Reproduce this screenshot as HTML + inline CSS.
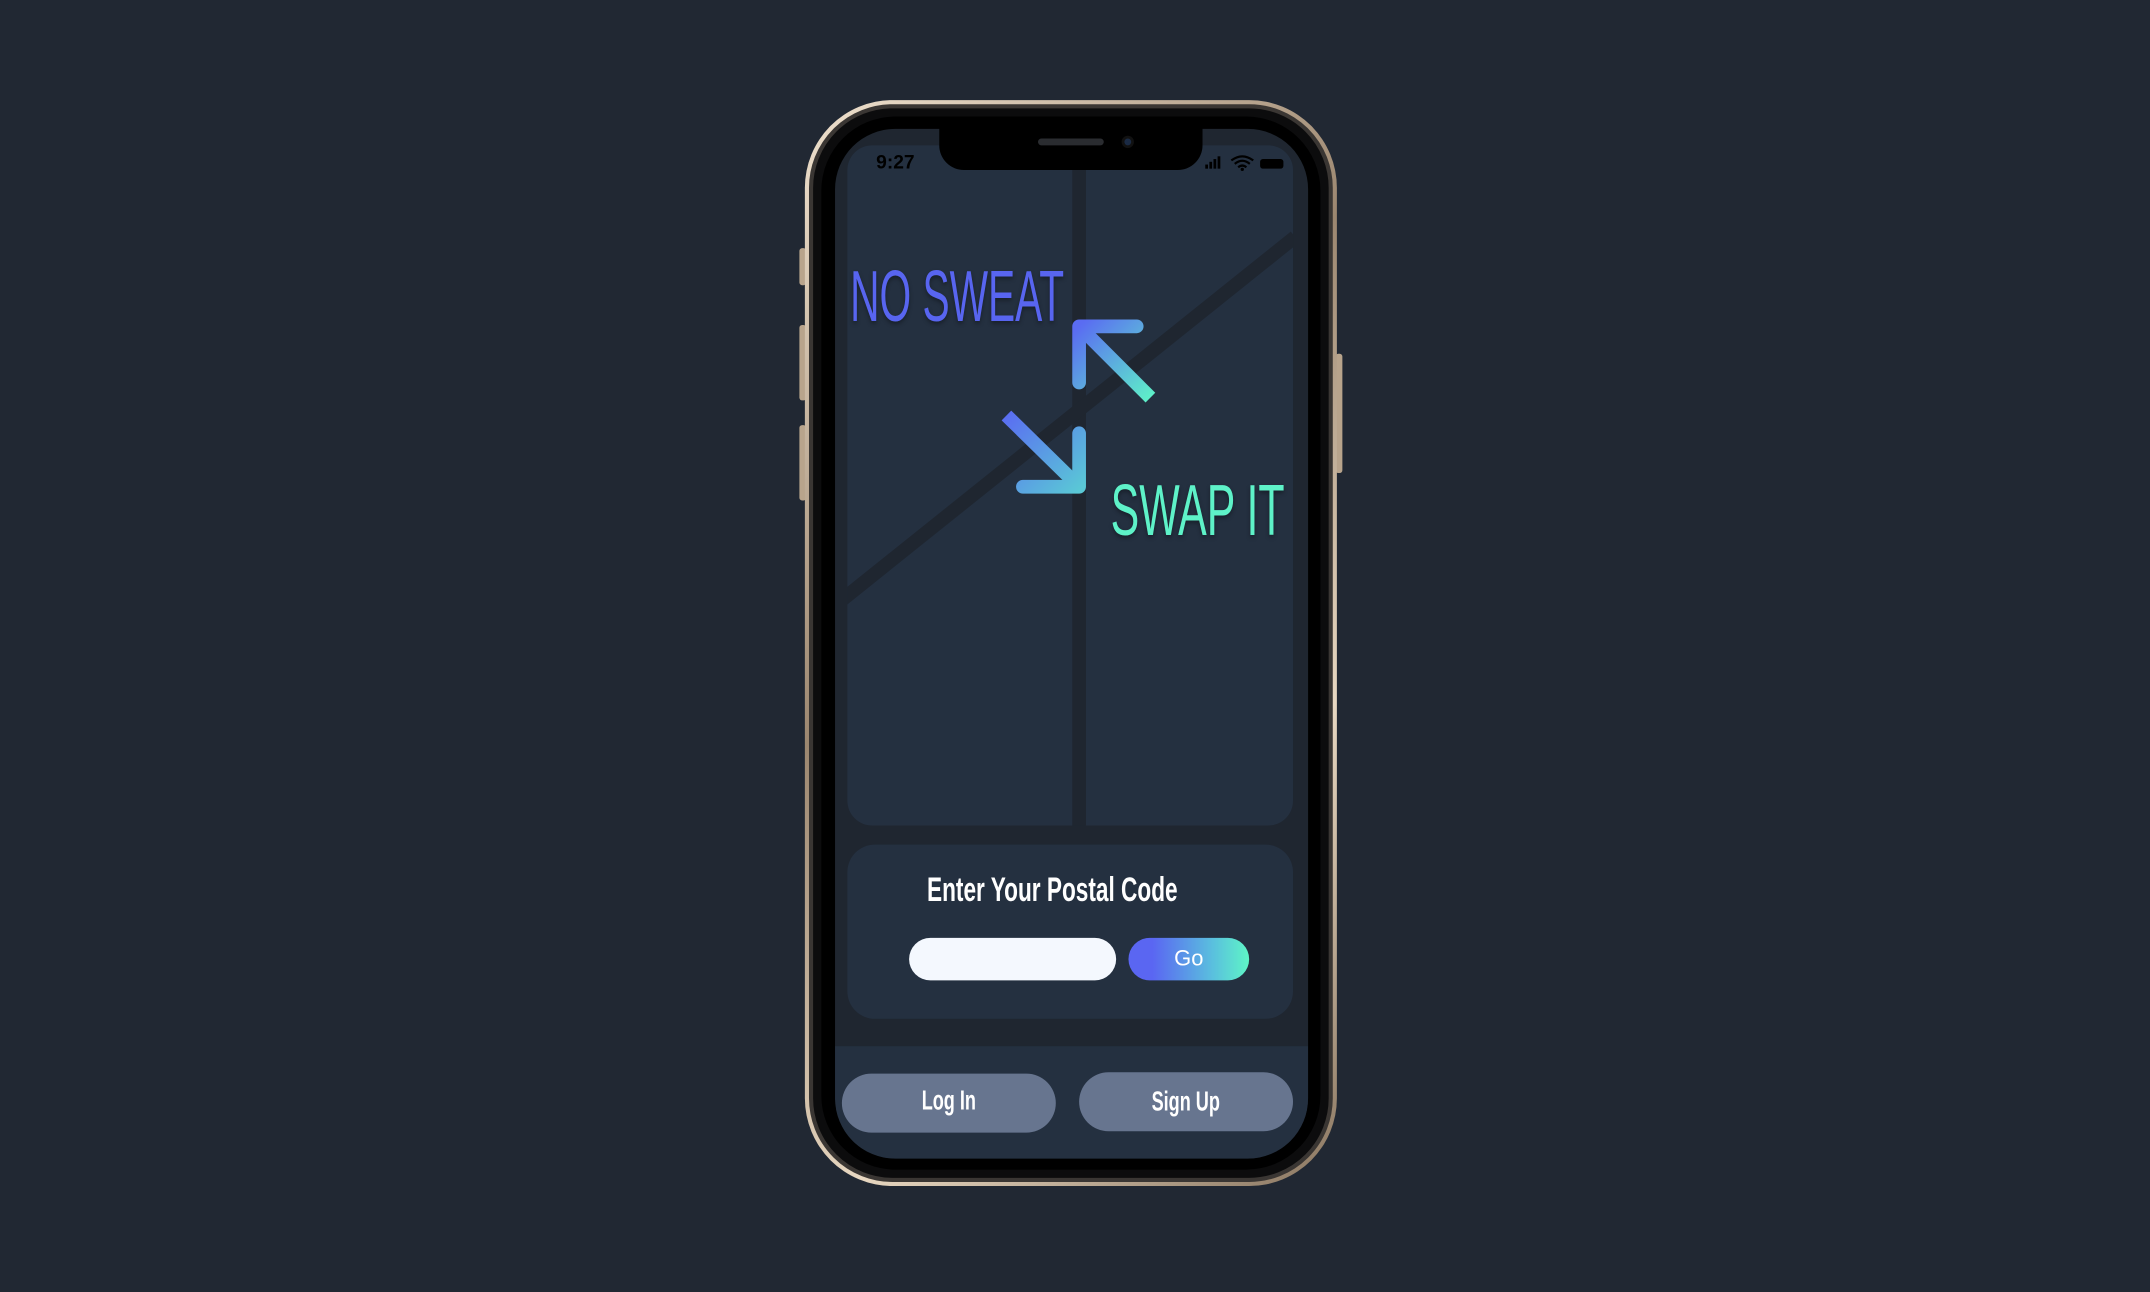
<!DOCTYPE html>
<html><head><meta charset="utf-8"><style>
*{margin:0;padding:0;box-sizing:border-box}
html,body{width:2150px;height:1292px;overflow:hidden;background:#212833}
#s{position:absolute;left:0;top:0;width:1568px;height:942px;transform:scale(1.37117);transform-origin:0 0;font-family:"Liberation Sans",sans-serif}
.a{position:absolute}
.btn{position:absolute;background:#67758f;border-radius:22px;color:#fff;font-weight:bold;text-align:center}
.c{display:inline-block;transform:scaleX(0.66);transform-origin:center;white-space:nowrap}
</style></head><body><div id="s">
<div class="a" style="left:583px;top:181px;width:5px;height:27px;background:#b8a48c;border-radius:2px"></div>
<div class="a" style="left:583px;top:237px;width:5px;height:55px;background:#b8a48c;border-radius:2px"></div>
<div class="a" style="left:583px;top:310px;width:5px;height:55px;background:#b8a48c;border-radius:2px"></div>
<div class="a" style="left:974px;top:258px;width:5px;height:87px;background:#b8a48c;border-radius:2px"></div>
<div class="a" style="left:587px;top:73px;width:388px;height:792px;border-radius:64px;background:linear-gradient(135deg,#f0e2cf,#9c8770 40%,#e8d8c2 70%,#8a7660)"></div>
<div class="a" style="left:590px;top:76px;width:382px;height:786px;border-radius:61px;background:#0c0c0d;border:3px solid #3a3633"></div>
<div class="a" style="left:599px;top:85px;width:364px;height:768px;border-radius:54px;background:#000"></div>
<div class="a" style="left:609px;top:94px;width:345px;height:751px;border-radius:44px;background:#1f2630;overflow:hidden">
  <div class="a" style="left:9px;top:12px;width:325px;height:496px;border-radius:18px;background:#243040;overflow:hidden">
    <div class="a" style="left:164px;top:0;width:10px;height:496px;background:#1f2630"></div>
    <div class="a" style="left:-20px;top:338px;width:440px;height:10px;background:#1f2630;transform:rotate(-38.7deg);transform-origin:0 0"></div>
  </div>
  <div class="a" style="left:9px;top:522px;width:325px;height:127px;border-radius:20px;background:#243040"></div>
  <div class="a" style="left:0;top:669px;width:345px;height:82px;background:#243040;border-radius:0 0 44px 44px"></div>
</div>
<div class="a" style="left:685px;top:86px;width:192px;height:38px;background:#000;border-radius:0 0 18px 18px"></div>
<div class="a" style="left:757px;top:101px;width:48px;height:5px;background:#2a2c30;border-radius:3px"></div>
<div class="a" style="left:818px;top:99px;width:9px;height:9px;background:#1a2a44;border-radius:50%;border:2px solid #111"></div>
<div class="a" style="left:639px;top:110px;font-size:14px;font-weight:bold;color:#000">9:27</div>
<svg class="a" style="left:876px;top:112px" width="64" height="14" viewBox="0 0 64 14">
<rect x="3" y="8" width="2" height="3" fill="#000"/><rect x="6" y="6" width="2" height="5" fill="#000"/><rect x="9" y="4" width="2" height="7" fill="#000"/><rect x="12" y="2" width="2" height="9" fill="#000"/>
<path d="M22 5 Q30 -1 38 5 M24.5 7.5 Q30 3 35.5 7.5 M27 10 Q30 7.5 33 10" stroke="#000" stroke-width="1.6" fill="none"/><circle cx="30" cy="11.5" r="1.2" fill="#000"/>
<rect x="43" y="4" width="17" height="7" rx="2" fill="#000"/>
</svg>
<div class="a" style="left:620px;top:186px;font-size:53px;line-height:62px;color:#5865f0;transform:scaleX(0.56);transform-origin:0 0;white-space:nowrap;text-shadow:0 2px 4px rgba(0,0,0,.35)">NO SWEAT</div>
<div class="a" style="left:810px;top:342px;font-size:53px;line-height:62px;color:#5ef2c8;transform:scaleX(0.59);transform-origin:0 0;white-space:nowrap;text-shadow:0 2px 4px rgba(0,0,0,.35)">SWAP IT</div>
<svg class="a" style="left:0;top:0" width="1568" height="942">
<defs>
<linearGradient id="g1" gradientUnits="userSpaceOnUse" x1="787" y1="238" x2="840" y2="291"><stop offset="0" stop-color="#5a6cf2"/><stop offset="1" stop-color="#5ef2c8"/></linearGradient>
<linearGradient id="g2" gradientUnits="userSpaceOnUse" x1="733" y1="302" x2="788" y2="357"><stop offset="0" stop-color="#5a6cf2"/><stop offset="1" stop-color="#5ac8d6"/></linearGradient>
</defs>
<path d="M829 238 H787 V279" stroke="url(#g1)" stroke-width="10" fill="none" stroke-linecap="round" stroke-linejoin="round"/>
<path d="M789 240 L839 290" stroke="url(#g1)" stroke-width="10" fill="none"/>
<path d="M746 355 H787 V316" stroke="url(#g2)" stroke-width="10" fill="none" stroke-linecap="round" stroke-linejoin="round"/>
<path d="M734 303 L785 353" stroke="url(#g2)" stroke-width="10" fill="none"/>
</svg>
<div class="a" style="left:618px;top:634px;width:298px;text-align:center;font-size:25px;line-height:30px;font-weight:bold;color:#fff"><span class="c" style="transform:scaleX(0.66)">Enter Your Postal Code</span></div>
<div class="a" style="left:663px;top:684px;width:151px;height:31px;background:#f4f8fe;border-radius:16px"></div>
<div class="a" style="left:823px;top:684px;width:88px;height:31px;border-radius:16px;background:linear-gradient(90deg,#5a66f2 20%,#5ac0de 70%,#5ef5c6);color:#fff;font-size:16px;line-height:31px;text-align:center">Go</div>
<div class="btn" style="left:614px;top:783px;width:156px;height:43px;font-size:20px;line-height:40px"><span class="c">Log In</span></div>
<div class="btn" style="left:787px;top:782px;width:156px;height:43px;font-size:20px;line-height:44px"><span class="c">Sign Up</span></div>
</div></body></html>
